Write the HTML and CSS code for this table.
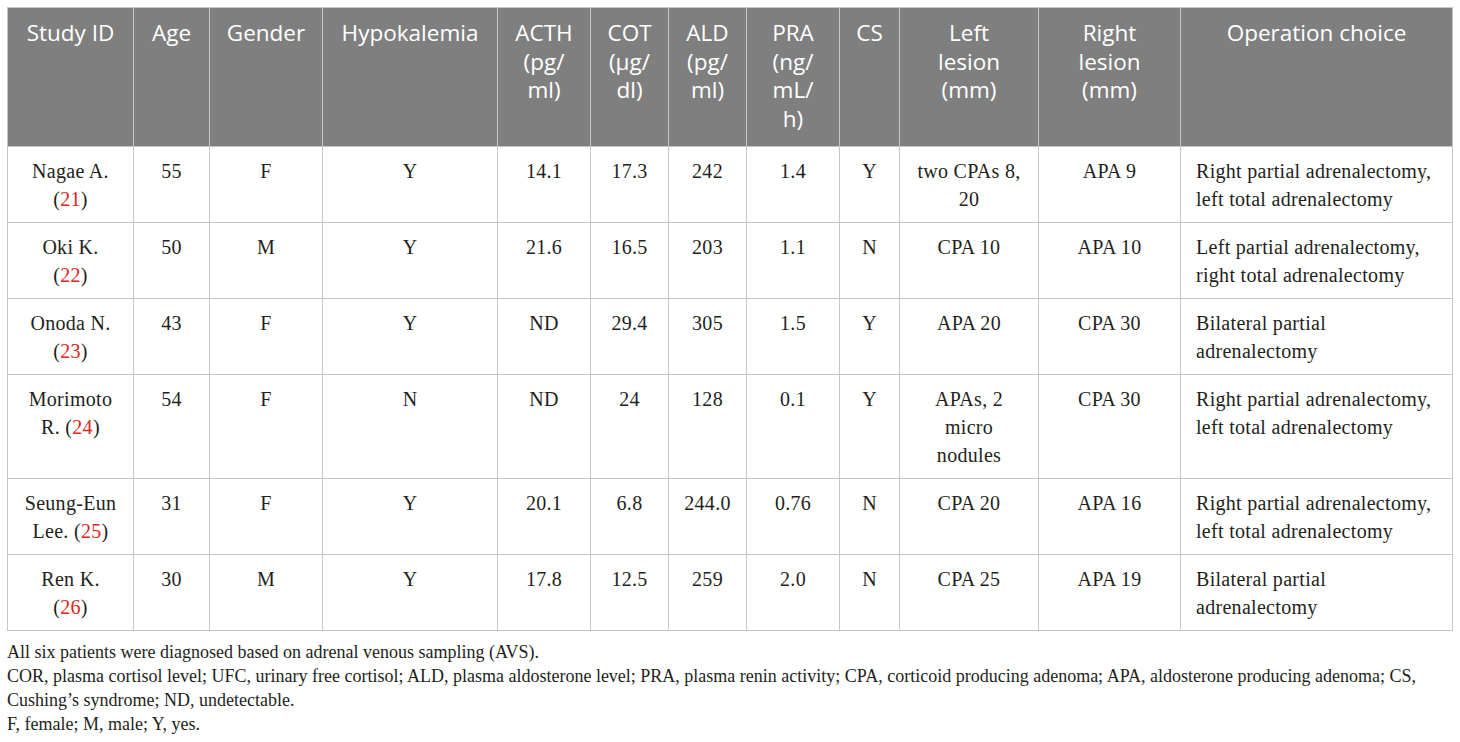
FILE: index.html
```html
<!DOCTYPE html>
<html lang="en">
<head>
    <meta charset="UTF-8">
    <title>Table 1</title>
    <link rel="stylesheet" href="styles.css">
</head>
<body>
    <div class="page">
        <table class="data">
            <colgroup>
                <col class="c-id"><col class="c-age"><col class="c-gender"><col class="c-hypo">
                <col class="c-acth"><col class="c-cot"><col class="c-ald"><col class="c-pra">
                <col class="c-cs"><col class="c-left"><col class="c-right"><col class="c-op">
            </colgroup>
            <thead>
                <tr>
                    <th>Study ID</th>
                    <th>Age</th>
                    <th>Gender</th>
                    <th>Hypokalemia</th>
                    <th>ACTH<br>(pg/<br>ml)</th>
                    <th>COT<br>(µg/<br>dl)</th>
                    <th>ALD<br>(pg/<br>ml)</th>
                    <th>PRA<br>(ng/<br>mL/<br>h)</th>
                    <th>CS</th>
                    <th>Left<br>lesion<br>(mm)</th>
                    <th>Right<br>lesion<br>(mm)</th>
                    <th>Operation choice</th>
                </tr>
            </thead>
            <tbody>
                <tr>
                    <td>Nagae A.<br>(<span class="ref">21</span>)</td>
                    <td>55</td><td>F</td><td>Y</td><td>14.1</td><td>17.3</td><td>242</td><td>1.4</td><td>Y</td>
                    <td class="lesion">two CPAs 8, 20</td><td>APA 9</td>
                    <td class="op">Right partial adrenalectomy, left total adrenalectomy</td>
                </tr>
                <tr>
                    <td>Oki K.<br>(<span class="ref">22</span>)</td>
                    <td>50</td><td>M</td><td>Y</td><td>21.6</td><td>16.5</td><td>203</td><td>1.1</td><td>N</td>
                    <td class="lesion">CPA 10</td><td>APA 10</td>
                    <td class="op">Left partial adrenalectomy, right total adrenalectomy</td>
                </tr>
                <tr>
                    <td>Onoda N.<br>(<span class="ref">23</span>)</td>
                    <td>43</td><td>F</td><td>Y</td><td>ND</td><td>29.4</td><td>305</td><td>1.5</td><td>Y</td>
                    <td class="lesion">APA 20</td><td>CPA 30</td>
                    <td class="op">Bilateral partial adrenalectomy</td>
                </tr>
                <tr>
                    <td>Morimoto<br>R. (<span class="ref">24</span>)</td>
                    <td>54</td><td>F</td><td>N</td><td>ND</td><td>24</td><td>128</td><td>0.1</td><td>Y</td>
                    <td class="lesion">APAs, 2 micro nodules</td><td>CPA 30</td>
                    <td class="op">Right partial adrenalectomy, left total adrenalectomy</td>
                </tr>
                <tr>
                    <td>Seung-Eun<br>Lee. (<span class="ref">25</span>)</td>
                    <td>31</td><td>F</td><td>Y</td><td>20.1</td><td>6.8</td><td>244.0</td><td>0.76</td><td>N</td>
                    <td class="lesion">CPA 20</td><td>APA 16</td>
                    <td class="op">Right partial adrenalectomy, left total adrenalectomy</td>
                </tr>
                <tr>
                    <td>Ren K.<br>(<span class="ref">26</span>)</td>
                    <td>30</td><td>M</td><td>Y</td><td>17.8</td><td>12.5</td><td>259</td><td>2.0</td><td>N</td>
                    <td class="lesion">CPA 25</td><td>APA 19</td>
                    <td class="op">Bilateral partial adrenalectomy</td>
                </tr>
            </tbody>
        </table>
        <div class="notes">
            <p>All six patients were diagnosed based on adrenal venous sampling (AVS).</p>
            <p>COR, plasma cortisol level; UFC, urinary free cortisol; ALD, plasma aldosterone level; PRA, plasma renin activity; CPA, corticoid producing adenoma; APA, aldosterone producing adenoma; CS, Cushing’s syndrome; ND, undetectable.</p>
            <p>F, female; M, male; Y, yes.</p>
        </div>
    </div>
</body>
</html>
```

FILE: styles.css
```css
body {
    margin: 0;
    background: #fff;
    color: #231f20;
}
.page {
    padding: 7px 8px 0 7px;
}
.data {
    border-collapse: collapse;
    table-layout: fixed;
    width: 1445px;
}
.c-id { width: 126px; }
.c-age { width: 76px; }
.c-gender { width: 113px; }
.c-hypo { width: 175px; }
.c-acth { width: 93px; }
.c-cot { width: 78px; }
.c-ald { width: 78px; }
.c-pra { width: 93px; }
.c-cs { width: 60px; }
.c-left { width: 139px; }
.c-right { width: 142px; }
.c-op { width: 272px; }
.data th,
.data td {
    border: 1px solid #c6c6c6;
    vertical-align: top;
    text-align: center;
}
.data th {
    background: #7f7f7f;
    color: #fff;
    font-family: "Open Sans", sans-serif;
    font-weight: normal;
    font-size: 22.5px;
    line-height: 28.5px;
    height: 139px;
    padding: 11px 4px 0;
    box-sizing: border-box;
}
.data td {
    font-family: "Liberation Serif", serif;
    font-size: 20px;
    letter-spacing: 0.3px;
    line-height: 28px;
    padding: 10px 8px 9px;
}
.data td.lesion {
    padding-left: 14px;
    padding-right: 14px;
}
.data td.op {
    text-align: left;
    padding-left: 15px;
    padding-right: 15px;
}
.ref {
    color: #e2231a;
}
.notes {
    font-family: "Liberation Serif", serif;
    font-size: 18px;
    line-height: 24px;
    padding-top: 9px;
}
.notes p {
    margin: 0;
}
```
